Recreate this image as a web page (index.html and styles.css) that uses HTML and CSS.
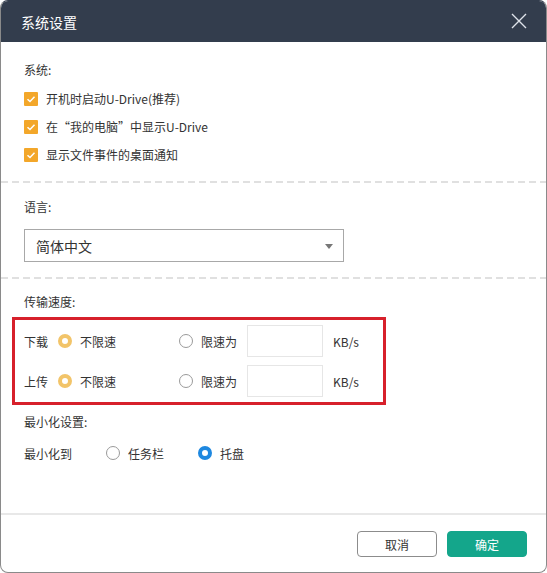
FILE: index.html
```html
<!DOCTYPE html>
<html lang="zh-CN">
<head>
<meta charset="utf-8">
<title>系统设置</title>
<link rel="stylesheet" href="styles.css">
</head>
<body>
<div class="dialog">
  <div class="header">
    <span class="title">系统设置</span>
    <svg class="close" width="16" height="16" viewBox="0 0 16 16"><path d="M1 1 L15 15 M15 1 L1 15" stroke="#dfe3ea" stroke-width="1.4" fill="none"/></svg>
  </div>
  <div class="main">
    <div class="section s1">
      <div class="label">系统:</div>
      <div class="checks">
        <div class="check-row"><span class="cb"><svg width="14" height="14" viewBox="0 0 14 14"><path d="M3.5 7.2 L6 9.5 L10.5 4.8" stroke="#fff" stroke-width="1.5" fill="none"/></svg></span>开机时启动U-Drive(推荐)</div>
        <div class="check-row"><span class="cb"><svg width="14" height="14" viewBox="0 0 14 14"><path d="M3.5 7.2 L6 9.5 L10.5 4.8" stroke="#fff" stroke-width="1.5" fill="none"/></svg></span>在“我的电脑”中显示U-Drive</div>
        <div class="check-row"><span class="cb"><svg width="14" height="14" viewBox="0 0 14 14"><path d="M3.5 7.2 L6 9.5 L10.5 4.8" stroke="#fff" stroke-width="1.5" fill="none"/></svg></span>显示文件事件的桌面通知</div>
      </div>
    </div>
    <div class="dash"></div>
    <div class="section s2">
      <div class="label">语言:</div>
      <div class="select"><span>简体中文</span><span class="caret"></span></div>
    </div>
    <div class="dash"></div>
    <div class="section s3">
      <div class="label">传输速度:</div>
      <div class="speed">
        <div class="spd-row">
          <span class="spd-label">下载</span>
          <span class="opt opt1"><span class="radio on-orange"></span>不限速</span>
          <span class="opt opt2"><span class="radio"></span>限速为</span>
          <span class="box"></span>
          <span class="unit">KB/s</span>
        </div>
        <div class="spd-row">
          <span class="spd-label">上传</span>
          <span class="opt opt1"><span class="radio on-orange"></span>不限速</span>
          <span class="opt opt2"><span class="radio"></span>限速为</span>
          <span class="box"></span>
          <span class="unit">KB/s</span>
        </div>
      </div>
      <div class="label min-label">最小化设置:</div>
      <div class="min-row">
        <span class="min-label-txt">最小化到</span>
        <span class="opt opt-task"><span class="radio"></span>任务栏</span>
        <span class="opt"><span class="radio on-blue"></span>托盘</span>
      </div>
    </div>
  </div>
  <div class="footer">
    <button class="btn btn-cancel">取消</button>
    <button class="btn btn-ok">确定</button>
  </div>
  <div class="highlight"></div>
</div>
</body>
</html>
```

FILE: styles.css
```css
* { box-sizing: border-box; }
html, body { margin: 0; padding: 0; background: #fff; }
body {
  font-family: "Noto Sans CJK SC", "Noto Sans", sans-serif;
  font-size: 12px;
  color: #333;
}
.dialog {
  position: relative;
  width: 547px;
  height: 573px;
  border: 1px solid #8a8a8a;
  border-top-color: #333d4d;
  border-radius: 8px;
  overflow: hidden;
  display: flex;
  flex-direction: column;
  background: #fff;
}
.header {
  height: 41px;
  flex: none;
  background: #333d4d;
  display: flex;
  align-items: center;
  justify-content: space-between;
  padding: 0 19px 0 20px;
}
.title { color: #fff; font-size: 14px; line-height: 20px; }
.close { display: block; margin-top: -1px; }
.main { flex: 1; display: flex; flex-direction: column; }
.section { padding-left: 23px; padding-right: 23px; }
.label { line-height: 20px; height: 20px; }
.s1 { padding-top: 18px; padding-bottom: 12px; }
.checks { margin-top: 5px; }
.check-row { height: 28px; display: flex; align-items: center; line-height: 20px; }
.cb {
  width: 14px; height: 14px; background: #f3a72a; border-radius: 1px;
  margin-right: 8px; display: block;
}
.cb svg { display: block; }
.dash {
  height: 2px;
  background: repeating-linear-gradient(to right, #e0e0e0 0 7px, transparent 7px 11px);
}
.s2 { padding-top: 14px; padding-bottom: 15px; }
.select {
  margin-top: 12px;
  width: 320px;
  height: 33px;
  border: 1px solid #a8a8a8;
  display: flex;
  align-items: center;
  justify-content: space-between;
  padding: 0 10px 0 11px;
  font-size: 14px;
  color: #333;
}
.caret {
  width: 0; height: 0;
  border-left: 4px solid transparent;
  border-right: 4px solid transparent;
  border-top: 5px solid #777;
  margin-top: 1px;
}
.s3 { padding-top: 13px; flex: 1; }
.speed { margin-top: 13px; display: flex; flex-direction: column; gap: 8px; }
.spd-row { height: 32px; display: flex; align-items: center; }
.spd-label { width: 34px; }
.opt { display: flex; align-items: center; }
.opt1 { width: 121px; }
.opt2 { width: 68px; }
.radio {
  width: 14px; height: 14px; border-radius: 50%;
  border: 1px solid #9a9a9a; background: #fff;
  margin-right: 8px; display: block; flex: none;
}
.radio.on-orange { border: 4.5px solid #f2c469; background: #fff; }
.radio.on-blue { border: 4.5px solid #1e88e0; background: #fff; }
.box { width: 76px; height: 32px; border: 1px solid #e6e6e6; }
.unit { margin-left: 10px; }
.min-label { margin-top: 15px; }
.min-row { margin-top: 11px; height: 20px; display: flex; align-items: center; }
.min-label-txt { width: 82px; }
.opt-task { width: 92px; }
.footer {
  flex: none;
  height: 59px;
  border-top: 2px solid #e8e8e8;
  display: flex;
  justify-content: flex-end;
  align-items: flex-start;
  gap: 10px;
  padding: 16px 19px 0 0;
}
.btn {
  width: 80px; height: 26px;
  border-radius: 4px;
  font-family: "Noto Sans CJK SC", "Noto Sans", sans-serif;
  font-size: 12px;
  padding: 0;
  cursor: pointer;
}
.btn-cancel { background: #fff; border: 1px solid #8c8c8c; color: #333; }
.btn-ok { background: #14a68b; border: 1px solid #14a68b; color: #fff; }
.highlight {
  position: absolute;
  left: 11px; top: 316px;
  width: 374px; height: 88px;
  border: 3px solid #d7202b;
  pointer-events: none;
}
```
